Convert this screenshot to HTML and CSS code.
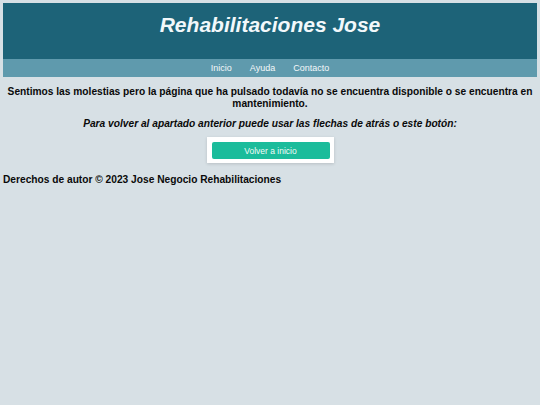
FILE: index.html
```html
<!DOCTYPE html>
<html lang="es">
<head>
<meta charset="utf-8">
<title>Rehabilitaciones Jose</title>
<link rel="stylesheet" href="styles.css">
</head>
<body>
<header class="site-header">
  <h1 class="site-title">Rehabilitaciones Jose</h1>
</header>
<nav class="site-nav">
  <a class="nav-link" href="#">Inicio</a>
  <a class="nav-link" href="#">Ayuda</a>
  <a class="nav-link" href="#">Contacto</a>
</nav>
<main class="content">
  <p class="notice">Sentimos las molestias pero la página que ha pulsado todavía no se encuentra disponible o se encuentra en mantenimiento.</p>
  <p class="hint">Para volver al apartado anterior puede usar las flechas de atrás o este botón:</p>
  <div class="btn-wrap">
    <a class="btn" href="#">Volver a inicio</a>
  </div>
</main>
<footer class="site-footer">Derechos de autor © 2023 Jose Negocio Rehabilitaciones</footer>
</body>
</html>
```

FILE: styles.css
```css
html, body {
  margin: 0;
  padding: 0;
}
body {
  margin: 3px;
  background: #d7e0e5;
  font-family: "Liberation Sans", Arial, sans-serif;
  color: #0a0a0a;
}
.site-header {
  background: #1d6378;
  height: 56px;
  text-align: center;
  box-sizing: border-box;
  padding-top: 9px;
}
.site-title {
  margin: 0;
  font-size: 21px;
  line-height: 25px;
  font-style: italic;
  font-weight: bold;
  color: #f2f8fb;
}
.site-nav {
  background: #5f9aad;
  height: 18px;
  display: flex;
  justify-content: center;
  align-items: center;
  gap: 18px;
}
.nav-link {
  color: #f4f8fa;
  text-decoration: none;
  font-size: 9px;
}
.content {
  text-align: center;
  padding-top: 9px;
}
.notice {
  margin: 0;
  font-size: 10.2px;
  line-height: 11.5px;
  font-weight: bold;
}
.hint {
  margin: 8.5px 0 0;
  font-size: 10.2px;
  line-height: 11.5px;
  font-weight: bold;
  font-style: italic;
}
.btn-wrap {
  display: inline-flex;
  margin-top: 8px;
  background: #ffffff;
  padding: 5px 4px 4px 5px;
  box-shadow: 0 1px 3px rgba(0,0,0,0.15);
}
.btn {
  display: flex;
  align-items: center;
  justify-content: center;
  width: 118px;
  height: 17px;
  background: #1bbc9b;
  border-radius: 2px;
  color: #f2fbf8;
  text-decoration: none;
  font-size: 8.5px;
}
.site-footer {
  margin-top: 11px;
  font-size: 10.2px;
  line-height: 11.5px;
  font-weight: bold;
}
```
